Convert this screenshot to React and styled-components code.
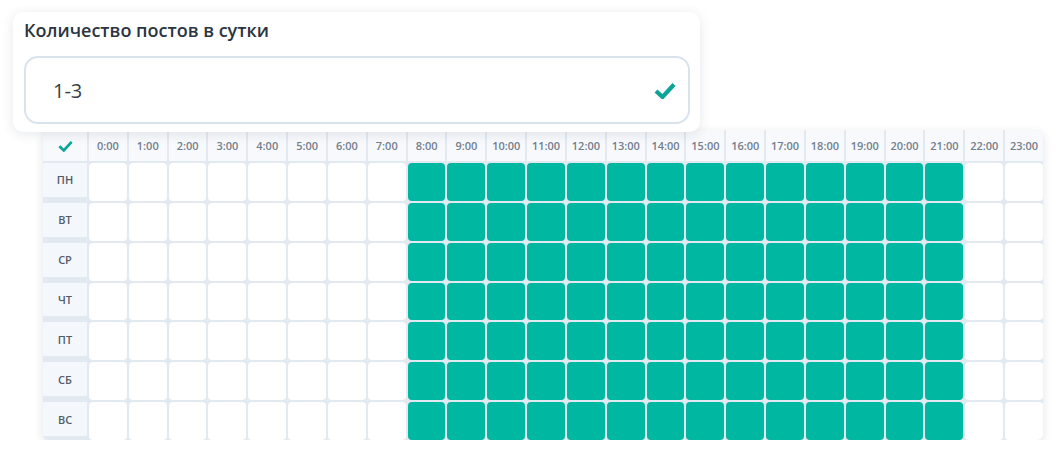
import React from "react";
import styled, { createGlobalStyle } from "styled-components";

const GlobalStyle = createGlobalStyle`
  body {
    margin: 0;
    background: #ffffff;
    font-family: "Open Sans", "Liberation Sans", sans-serif;
  }
`;

const Page = styled.div`
  padding: 12px 0 0 13px;
  display: flex;
  flex-direction: column;
  align-items: flex-start;
`;

const Card = styled.div`
  position: relative;
  z-index: 2;
  width: 687px;
  box-sizing: border-box;
  padding: 6px 10px 8px 11px;
  background: #fff;
  border-radius: 10px;
  box-shadow: 0 2px 12px rgba(40, 55, 75, 0.12);
`;

const Title = styled.div`
  font-size: 18px;
  line-height: 24px;
  font-weight: 650;
  color: #2b3440;
  margin-bottom: 14px;
`;

const Field = styled.div`
  height: 68px;
  box-sizing: border-box;
  border: 2px solid #d9e3ee;
  border-radius: 14px;
  display: flex;
  align-items: center;
  justify-content: space-between;
  padding: 0 12px 0 27px;
  font-size: 20px;
  color: #3a3d42;
`;

// checkmark used in the field and in the table corner
const Check = ({ w = 22, h = 17, stroke = 4 }) => (
  <svg width={w} height={h} viewBox="0 0 22 17">
    <path
      d="M2 9 L8.5 15 L20 2.5"
      fill="none"
      stroke="#0aa597"
      strokeWidth={stroke}
      strokeLinecap="butt"
      strokeLinejoin="miter"
    />
  </svg>
);

const Table = styled.div`
  margin: -2px 0 0 30px;
  width: 1000px;
  height: 310px;
  display: grid;
  grid-template-columns: 44px repeat(24, 1fr);
  grid-template-rows: 31px repeat(7, 1fr);
  gap: 2px;
  background: #e3e9f1;
  border-radius: 6px;
  overflow: hidden;
  box-shadow: 0 3px 10px rgba(40, 55, 75, 0.14);
`;

const HeadCell = styled.div`
  background: #f7f9fc;
  display: flex;
  align-items: center;
  justify-content: center;
  font-size: 11px;
  font-weight: 600;
  color: #727e8c;
`;

const DayCell = styled.div`
  background: #f4f7fb;
  margin-bottom: 4px;
  display: flex;
  align-items: center;
  justify-content: center;
  font-size: 11px;
  font-weight: 650;
  color: #525c69;
`;

const Slot = styled.div`
  border-radius: 4px;
  background: ${(p) => (p.$on ? "#00b7a1" : "#ffffff")};
`;

const hours = Array.from({ length: 24 }, (_, i) => i);
const days = ["ПН", "ВТ", "СР", "ЧТ", "ПТ", "СБ", "ВС"];

export default function App() {
  return (
    <>
      <GlobalStyle />
      <Page>
        <Card>
          <Title>Количество постов в сутки</Title>
          <Field>
            <span>1-3</span>
            <Check w={22} h={17} stroke={4.2} />
          </Field>
        </Card>
        <Table>
          <HeadCell>
            <Check w={15} h={12} stroke={4} />
          </HeadCell>
          {hours.map((h) => (
            <HeadCell key={h}>{h}:00</HeadCell>
          ))}
          {days.map((d) => (
            <React.Fragment key={d}>
              <DayCell>{d}</DayCell>
              {hours.map((h) => (
                <Slot key={h} $on={h >= 8 && h <= 21} />
              ))}
            </React.Fragment>
          ))}
        </Table>
      </Page>
    </>
  );
}
